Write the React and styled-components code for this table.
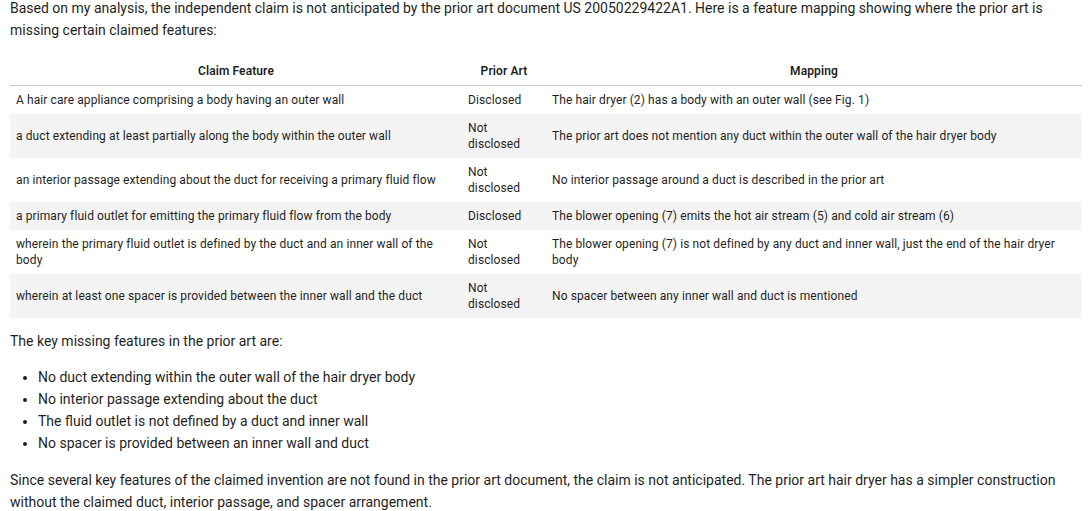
import React from "react";
import styled, { createGlobalStyle } from "styled-components";

const rows = [
  {
    feature: "A hair care appliance comprising a body having an outer wall",
    status: "Disclosed",
    mapping: "The hair dryer (2) has a body with an outer wall (see Fig. 1)",
  },
  {
    feature: "a duct extending at least partially along the body within the outer wall",
    status: "Not disclosed",
    mapping: "The prior art does not mention any duct within the outer wall of the hair dryer body",
  },
  {
    feature: "an interior passage extending about the duct for receiving a primary fluid flow",
    status: "Not disclosed",
    mapping: "No interior passage around a duct is described in the prior art",
  },
  {
    feature: "a primary fluid outlet for emitting the primary fluid flow from the body",
    status: "Disclosed",
    mapping: "The blower opening (7) emits the hot air stream (5) and cold air stream (6)",
  },
  {
    feature: "wherein the primary fluid outlet is defined by the duct and an inner wall of the body",
    status: "Not disclosed",
    mapping:
      "The blower opening (7) is not defined by any duct and inner wall, just the end of the hair dryer body",
  },
  {
    feature: "wherein at least one spacer is provided between the inner wall and the duct",
    status: "Not disclosed",
    mapping: "No spacer between any inner wall and duct is mentioned",
  },
];

const missing = [
  "No duct extending within the outer wall of the hair dryer body",
  "No interior passage extending about the duct",
  "The fluid outlet is not defined by a duct and inner wall",
  "No spacer is provided between an inner wall and duct",
];

const App = () => {
  return (
    <Page>
      <GlobalStyle />
      <Text $top={-3} $bottom={16}>
        Based on my analysis, the independent claim is not anticipated by the prior art document US
        20050229422A1. Here is a feature mapping showing where the prior art is missing certain
        claimed features:
      </Text>
      <Table>
        <colgroup>
          <col style={{ width: 452 }} />
          <col style={{ width: 84 }} />
          <col style={{ width: 536 }} />
        </colgroup>
        <thead>
          <tr>
            <Th>Claim Feature</Th>
            <Th>Prior Art</Th>
            <Th>Mapping</Th>
          </tr>
        </thead>
        <tbody>
          {rows.map((r, i) => (
            <Row key={i}>
              <Td>{r.feature}</Td>
              <Td>{r.status}</Td>
              <Td>{r.mapping}</Td>
            </Row>
          ))}
        </tbody>
      </Table>
      <Text $top={12} $bottom={14}>
        The key missing features in the prior art are:
      </Text>
      <List>
        {missing.map((m) => (
          <li key={m}>{m}</li>
        ))}
      </List>
      <Text $top={15} $bottom={0}>
        Since several key features of the claimed invention are not found in the prior art
        document, the claim is not anticipated. The prior art hair dryer has a simpler construction
        without the claimed duct, interior passage, and spacer arrangement.
      </Text>
    </Page>
  );
};

export default App;

const GlobalStyle = createGlobalStyle`
  body {
    margin: 0;
    background: #ffffff;
    color: #1f1f1f;
    font-family: "Segoe UI", Roboto, "Liberation Sans", sans-serif;
  }
`;

const Page = styled.div`
  padding: 0 10px;
  width: 1072px;
`;

const Text = styled.p`
  font-size: 14px;
  line-height: 22px;
  margin: ${(p) => p.$top}px 0 ${(p) => p.$bottom}px;
`;

const Table = styled.table`
  width: 100%;
  table-layout: fixed;
  border-collapse: collapse;
  font-size: 12px;
  line-height: 16px;
  letter-spacing: 0.1px;
`;

const Th = styled.th`
  padding: 6px;
  font-weight: 600;
  text-align: center;
  border-bottom: 1px solid #c8c8c8;
`;

const Row = styled.tr`
  &:nth-child(even) {
    background: #f4f4f4;
  }
`;

const Td = styled.td`
  padding: 6px;
  text-align: left;
  vertical-align: middle;
`;

const List = styled.ul`
  margin: 0;
  padding-left: 28px;
  font-size: 14px;
  line-height: 22px;
`;
